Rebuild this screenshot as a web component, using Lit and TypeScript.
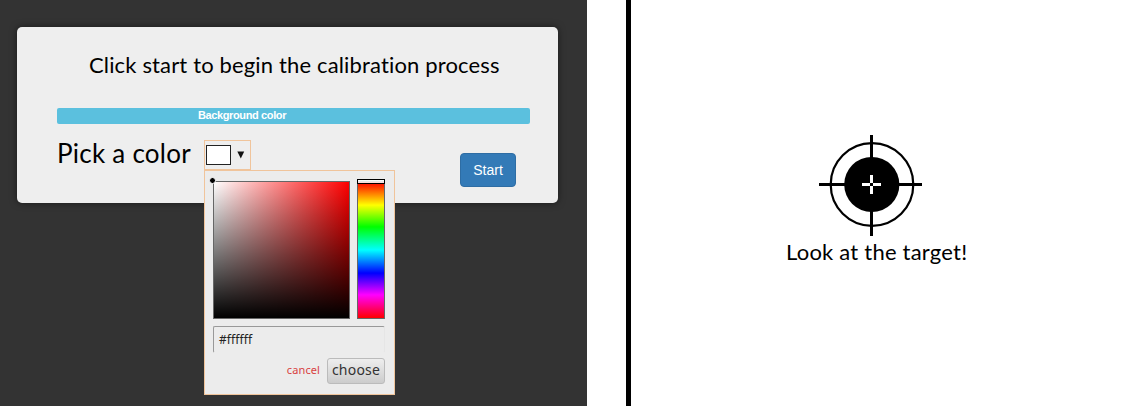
import { LitElement, html, css } from "lit";
import { customElement, property } from "lit/decorators.js";

@customElement("color-picker")
class ColorPicker extends LitElement {
  @property() value = "#ffffff";

  static styles = css`
    :host { display: block; position: relative; width: 47px; height: 30px; }
    * { box-sizing: border-box; }
    .replacer { display: flex; align-items: center; width: 47px; height: 30px; border: 1px solid #f0c49b; padding-left: 1px; background: #eee; }
    .swatch { width: 25px; height: 20px; border: 1px solid #222; background: #fff; }
    .arrow { display: block; margin: -1px 0 0 6px; }
    .popup { position: absolute; z-index: 2; left: 0; top: 30px; width: 191px; height: 225px; border: 1px solid #f0c49b; background: #ececec; padding: 10px 9px 0 8px; display: flex; flex-direction: column; }
    .row { display: flex; justify-content: space-between; }
    .field { position: relative; width: 137px; height: 138px; border: 1px solid #666; background: linear-gradient(to top, #000, rgba(0, 0, 0, 0)), linear-gradient(to right, #fff, #f00); }
    .dot { position: absolute; left: -5px; top: -5px; width: 7px; height: 7px; border: 1px solid #fff; border-radius: 50%; background: #000; background-clip: border-box; }
    .hue { position: relative; width: 28px; height: 138px; border: 1px solid #666; background: linear-gradient(to bottom, #f00 0%, #ff0 17%, #0f0 33%, #0ff 50%, #00f 67%, #f0f 83%, #f00 100%); }
    .slider { position: absolute; left: -1px; top: -3px; width: 28px; height: 5px; border: 1px solid #000; background: rgba(255, 255, 255, 0.85); }
    .entry { margin-top: 7px; height: 27px; border: 1px solid #999; border-right-color: #e6e6e6; border-bottom-color: #ececec; border-radius: 2px; padding-left: 5px; font: 12px/26px "Noto Sans", sans-serif; letter-spacing: 0.1px; color: #222; }
    .actions { display: flex; align-items: center; justify-content: flex-end; margin-top: 5px; height: 26px; }
    .cancel { color: #d93f3f; font: 11px/24px "Noto Sans", sans-serif; letter-spacing: 0.1px; margin: -2px 7px 0 0; }
    .choose { width: 58px; height: 26px; border: 1px solid #bbb; border-radius: 3px; background: linear-gradient(#eee, #ccc); text-align: center; font: 14px/22px "Noto Sans", sans-serif; letter-spacing: 0.2px; color: #333; white-space: nowrap; }
  `;

  render() {
    return html`
      <div class="replacer">
        <div class="swatch"></div>
        <svg class="arrow" width="8" height="8" viewBox="0 0 8 8"><path d="M0.3 0.5H7.2L3.8 7.5Z" fill="#111" /></svg>
      </div>
      <div class="popup">
        <div class="row">
          <div class="field"><div class="dot"></div></div>
          <div class="hue"><div class="slider"></div></div>
        </div>
        <div class="entry"><span>${this.value}</span></div>
        <div class="actions"><span class="cancel">cancel</span><div class="choose">choose</div></div>
      </div>
    `;
  }
}

@customElement("app-root")
class AppRoot extends LitElement {
  static styles = css`
    :host { display: flex; width: 1129px; height: 406px; overflow: hidden; background: #fff; color: #000; }
    * { box-sizing: border-box; }
    .setup { width: 587px; height: 406px; background: #333; padding: 27px 29px 0 17px; }
    .card { height: 176px; border-radius: 5px; background: #eee; box-shadow: 0 0 7px rgba(0, 0, 0, 0.5); padding: 22px 28px 0 40px; }
    .heading { height: 32px; margin-left: 32px; font: 22px/32px Lato, sans-serif; letter-spacing: 0.15px; white-space: nowrap; }
    .band { height: 16px; margin-top: 27px; border-radius: 2px; background: #5bc0de; color: #fff; padding-left: 141px; font: bold 11px/15px "Liberation Sans", sans-serif; letter-spacing: -0.38px; white-space: nowrap; }
    .controls { display: flex; margin-top: 16px; }
    .label { width: 147px; height: 30px; font: 26px/27px Lato, sans-serif; letter-spacing: 0.25px; white-space: nowrap; }
    .start { margin: 13px 14px 0 auto; width: 56px; height: 34px; border: 1px solid #2e6da4; border-radius: 4px; background: #337ab7; color: #fff; padding: 0; font: 14px/32px "Liberation Sans", sans-serif; }
    .stage { margin-left: 39px; flex: 1; border-left: 5px solid #000; padding-top: 135px; }
    .target { display: block; margin-left: 188px; }
    .caption { margin-left: 155px; height: 32px; font: 22px/32px Lato, sans-serif; letter-spacing: 0.22px; white-space: nowrap; }
  `;

  render() {
    return html`
      <div class="setup">
        <div class="card">
          <div class="heading"><span>Click start to begin the calibration process</span></div>
          <div class="band">Background color</div>
          <div class="controls">
            <div class="label"><span>Pick a color</span></div>
            <color-picker></color-picker>
            <button class="start">Start</button>
          </div>
        </div>
      </div>
      <div class="stage">
        <svg class="target" width="103" height="101" viewBox="0 0 103 101">
          <circle cx="53" cy="49.5" r="41.3" fill="none" stroke="#000" stroke-width="2.2" />
          <circle cx="52.8" cy="49.5" r="27.6" />
          <path d="M51 0h3v101h-3zM0 48h103v3H0z" />
          <path d="M51 40h3v8h-3zM51 51h3v8h-3zM43 48h8v3h-8zM54 48h8v3h-8z" fill="#fff" />
        </svg>
        <div class="caption"><span>Look at the target!</span></div>
      </div>
    `;
  }
}
